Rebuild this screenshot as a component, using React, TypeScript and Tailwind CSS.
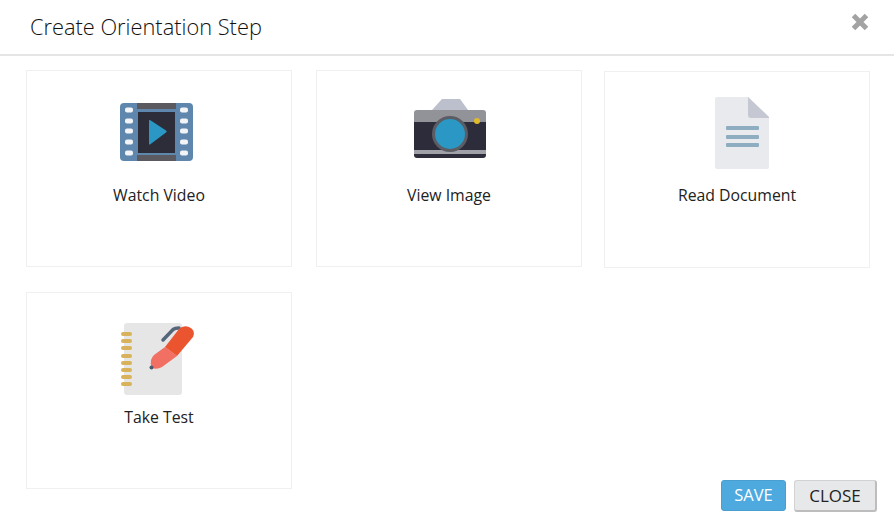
const VideoIcon = () => (
  <svg width="80" height="80" viewBox="0 0 80 80">
    <rect x="1" y="8" width="73" height="58" rx="4" fill="#5f87ad" />
    <rect x="18" y="8" width="39" height="6" fill="#5a5a60" />
    <rect x="18" y="60" width="39" height="6" fill="#5a5a60" />
    <rect x="18" y="14" width="39" height="46" fill="#5f87ad" />
    <rect x="19" y="17" width="37" height="41" fill="#2d2d3a" />
    {[15, 26, 36, 47, 58].map((y) => (
      <g key={y}>
        <rect x="6" y={y - 2.5} width="8" height="5" rx="2" fill="#f2f4f7" />
        <rect x="61" y={y - 2.5} width="8" height="5" rx="2" fill="#f2f4f7" />
      </g>
    ))}
    <path d="M31 25 L47 35.5 Q48.5 36.5 47 37.5 L31 49.5 Q30 50 30 48.5 L30 26 Q30 24.5 31 25 Z" fill="#2a97c4" />
  </svg>
);

const CameraIcon = () => (
  <svg width="80" height="80" viewBox="0 0 80 80">
    <path d="M23 15 L33 4 L51 4 L59 15 Z" fill="#bcc0cc" />
    <path d="M5 27 L5 18 Q5 15 8 15 L74 15 Q77 15 77 18 L77 27 Z" fill="#929398" />
    <path d="M5 27 L77 27 L77 60 Q77 63 74 63 L8 63 Q5 63 5 60 Z" fill="#2c2c3a" />
    <rect x="5" y="55" width="72" height="4" fill="#a0a0a8" />
    <circle cx="41" cy="39" r="18" fill="#5c5c64" />
    <circle cx="41" cy="39" r="15" fill="#2a97c4" />
    <circle cx="68" cy="26" r="3" fill="#e0b92c" />
  </svg>
);

const DocIcon = () => (
  <svg width="80" height="80" viewBox="0 0 80 80">
    <path d="M20 2 L51 2 L72 22 L72 72 Q72 74 70 74 L20 74 Q18 74 18 72 L18 4 Q18 2 20 2 Z" fill="#e8eaed" />
    <path d="M51 2 L72 22 L72 23 L54 23 Q51 23 51 20 Z" fill="#c5c8d2" />
    {[33, 42, 50].map((y) => (
      <rect key={y} x="29" y={y - 2} width="33" height="4" rx="1" fill="#8fadc1" />
    ))}
  </svg>
);

const TestIcon = () => (
  <svg width="80" height="80" viewBox="0 0 80 80">
    <rect x="5" y="6" width="58" height="72" rx="3" fill="#e6e6e6" />
    {[17, 24, 31, 39, 46, 53, 60, 67].map((y) => (
      <rect key={y} x="2" y={y - 2} width="11" height="4" rx="2" fill="#d9b35c" />
    ))}
    <path d="M44 23 L54 12.5 Q56 11 60 11" fill="none" stroke="#55657a" strokeWidth="3.5" strokeLinecap="round" />
    <path d="M32 43 Q33 40 35 38 L46 30 L58 39 L43 50 Q38 53 33 51 Q31 47 32 43 Z" fill="#f26f63" />
    <path d="M46 30 L60 12 Q64 8 70 10 Q77 13 74 20 L58 39 Z" fill="#ea5530" />
    <circle cx="32.5" cy="50.5" r="2" fill="#4a5d70" />
  </svg>
);

const Card = ({ label, icon, className }: { label: string; icon: React.ReactNode; className: string }) => (
  <div className={`w-[266px] h-[197px] border border-[#f0f0f0] flex flex-col items-center pt-6 ${className}`}>
    {icon}
    <div className="mt-[9px] text-[15.8px] leading-[22px] text-[#222]">{label}</div>
  </div>
);

export default function App() {
  return (
    <div className="w-[894px] h-[524px] bg-white overflow-hidden font-['Open_Sans',sans-serif]">
      <div className="h-[56px] border-b-2 border-[#e5e5e5] flex justify-between pl-[30px] pr-[25px]">
        <h1 className="mt-[11px] text-[21.8px] leading-[32px] font-light text-[#111]">Create Orientation Step</h1>
        <svg className="mt-[13px]" width="18" height="18" viewBox="0 0 18 18">
          <path d="M2.5 2.5 L15.5 15.5 M15.5 2.5 L2.5 15.5" stroke="#a3a3a3" strokeWidth="5" />
        </svg>
      </div>
      <div className="pl-[26px]">
        <div className="flex mt-[14px]">
          <Card label="Watch Video" icon={<VideoIcon />} className="" />
          <Card label="View Image" icon={<CameraIcon />} className="ml-6" />
          <Card label="Read Document" icon={<DocIcon />} className="ml-[22px] mt-px pt-[23px]" />
        </div>
        <Card label="Take Test" icon={<TestIcon />} className="mt-6" />
      </div>
      <div className="flex justify-end gap-2 pr-[17px] -mt-[9px]">
        <button className="w-[65px] h-[31px] rounded-[3px] bg-[#4ea9df] border border-[#4a9ed0] text-white text-[16.5px]">
          SAVE
        </button>
        <button className="w-[83px] h-[32px] rounded-[3px] bg-[#e7e8ea] border border-[#d2d2d2] border-r-2 border-b-2 border-r-[#bdbdbd] border-b-[#bdbdbd] text-[#222] text-[17px]">
          CLOSE
        </button>
      </div>
    </div>
  );
}
